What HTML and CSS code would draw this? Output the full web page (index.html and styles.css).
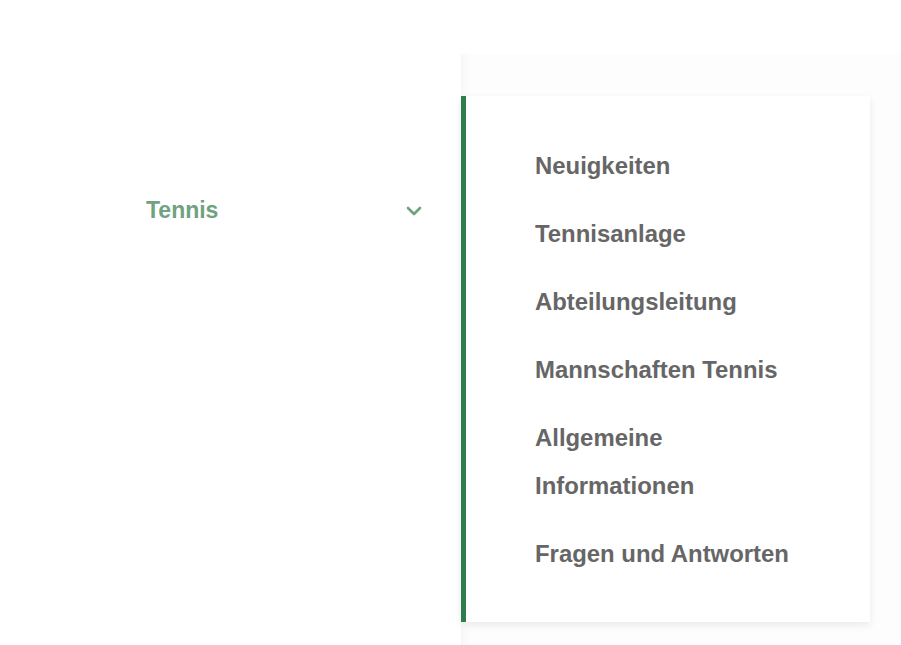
FILE: index.html
```html
<!DOCTYPE html>
<html lang="de">
<head>
<meta charset="utf-8">
<title>Tennis Menü</title>
<link rel="stylesheet" href="styles.css">
</head>
<body>
<div class="page">
  <nav class="side">
    <div class="side-item">
      <span class="side-label">Tennis</span>
      <svg class="chev" width="16" height="12" viewBox="0 0 16 12" aria-hidden="true">
        <path d="M2 3 L8 9 L14 3" fill="none" stroke="#6fa27f" stroke-width="2.6" stroke-linecap="round" stroke-linejoin="round"/>
      </svg>
    </div>
  </nav>
  <div class="panel">
    <ul class="card">
      <li class="item">Neuigkeiten</li>
      <li class="item">Tennisanlage</li>
      <li class="item">Abteilungsleitung</li>
      <li class="item">Mannschaften Tennis</li>
      <li class="item">Allgemeine Informationen</li>
      <li class="item">Fragen und Antworten</li>
    </ul>
  </div>
</div>
</body>
</html>
```
FILE: styles.css
```css
html, body {
  margin: 0;
  padding: 0;
  background: #ffffff;
}
body {
  font-family: "Liberation Sans", Arial, sans-serif;
  width: 901px;
  height: 645px;
  overflow: hidden;
}
.page {
  display: flex;
  height: 645px;
}
.side {
  width: 461px;
  flex: none;
  box-sizing: border-box;
  padding: 186px 40px 0 146px;
}
.side-item {
  display: flex;
  align-items: center;
  justify-content: space-between;
  height: 48px;
}
.side-label {
  font-size: 23px;
  font-weight: bold;
  color: #6fa27f;
  line-height: 48px;
}
.chev {
  display: block;
  margin-top: 2px;
  margin-right: -1px;
}
.panel {
  flex: 1;
  margin-top: 54px;
  background: #fdfdfd;
  box-shadow: inset 10px 0 10px -8px rgba(0, 0, 0, 0.04);
}
.card {
  list-style: none;
  margin: 42px 0 0 0;
  width: 409px;
  box-sizing: border-box;
  padding: 36px 68px 34px 69px;
  background: #ffffff;
  border-left: 5px solid #2f7d4d;
  box-shadow: 0 3px 8px rgba(0, 0, 0, 0.08);
}
.item {
  font-size: 23.9px;
  font-weight: bold;
  color: #666666;
  line-height: 48px;
  padding: 10px 0;
}
```
